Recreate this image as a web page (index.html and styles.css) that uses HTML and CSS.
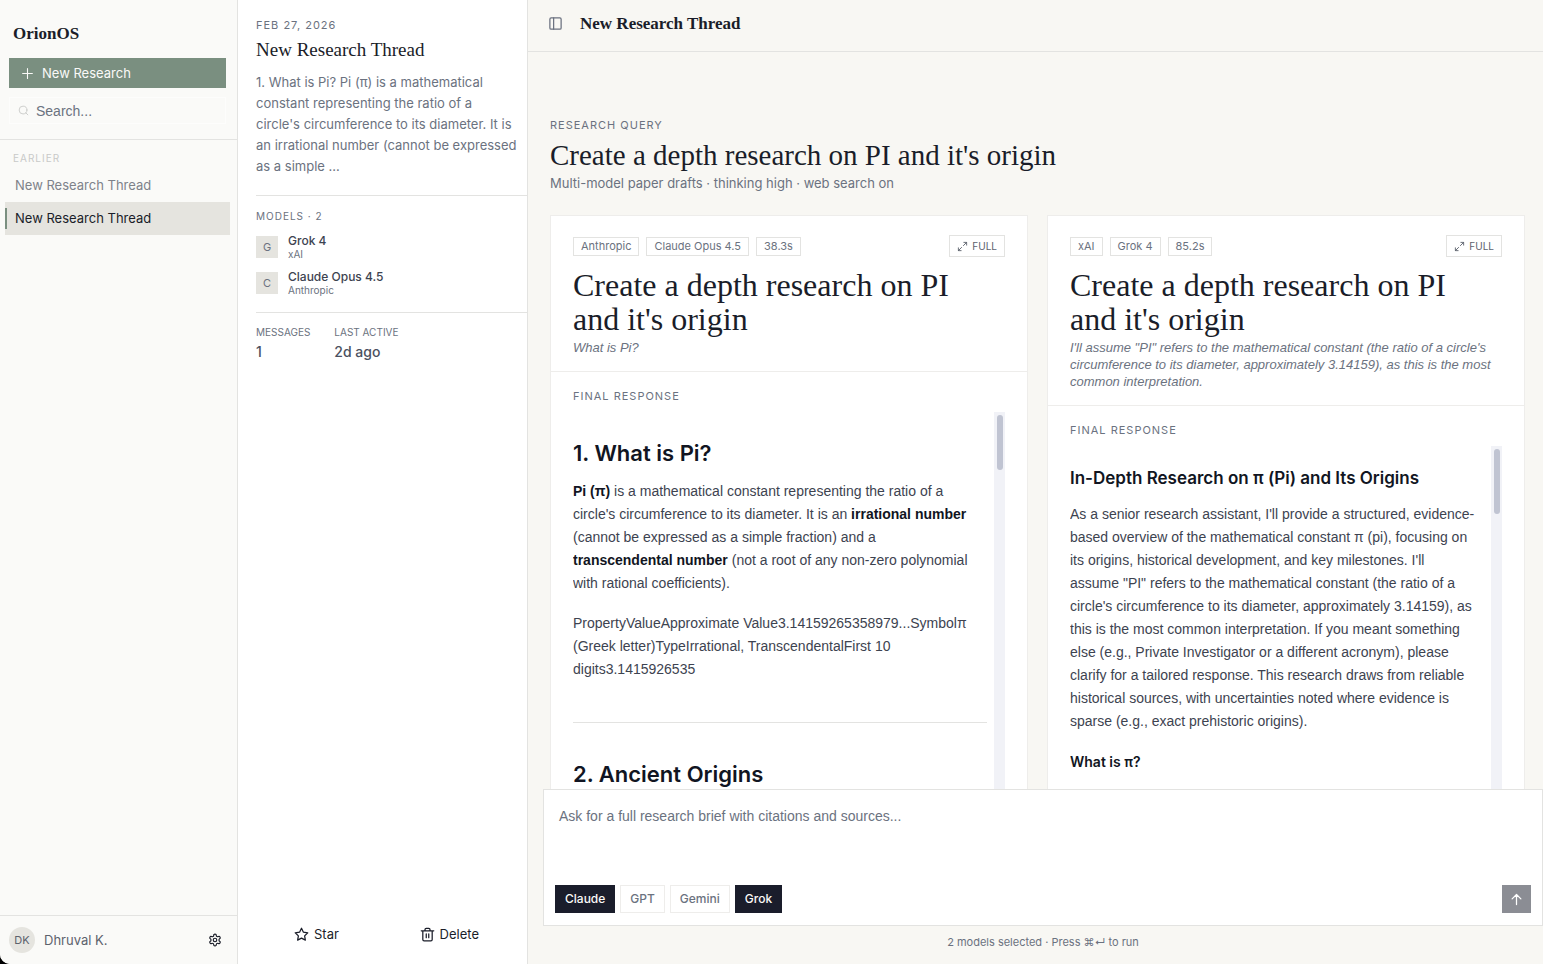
FILE: index.html
```html
<!DOCTYPE html>
<html lang="en">
<head>
    <meta charset="UTF-8">
    <meta name="viewport" content="width=device-width, initial-scale=1.0">
    <title>OrionOS</title>
    <link rel="stylesheet" href="styles.css">
</head>
<body>
    <div class="app">
        <aside class="sidebar">
            <div class="sidebar-top">
                <div class="brand">OrionOS</div>
                <button class="new-research">
                    <svg width="13" height="13" viewBox="0 0 24 24" class="icon"><path d="M3 12h18M12 3v18"/></svg>
                    New Research
                </button>
                <label class="search">
                    <svg width="11" height="11" viewBox="0 0 24 24" class="icon"><circle cx="11" cy="11" r="8.5"/><path d="m21.5 21.5-4.4-4.4"/></svg>
                    <input type="text" placeholder="Search..." aria-label="Search">
                </label>
            </div>
            <nav class="threads">
                <h2 class="threads-label">EARLIER</h2>
                <a href="#" class="thread">New Research Thread</a>
                <a href="#" class="thread active">New Research Thread</a>
            </nav>
            <div class="user">
                <span class="avatar">DK</span>
                <span class="user-name">Dhruval K.</span>
                <button class="icon-button" aria-label="Settings">
                    <svg width="14" height="14" viewBox="0 0 24 24" class="icon"><path d="M12.22 2h-.44a2 2 0 0 0-2 2v.18a2 2 0 0 1-1 1.73l-.43.25a2 2 0 0 1-2 0l-.15-.08a2 2 0 0 0-2.73.73l-.22.38a2 2 0 0 0 .73 2.73l.15.1a2 2 0 0 1 1 1.72v.51a2 2 0 0 1-1 1.74l-.15.09a2 2 0 0 0-.73 2.73l.22.38a2 2 0 0 0 2.73.73l.15-.08a2 2 0 0 1 2 0l.43.25a2 2 0 0 1 1 1.73V20a2 2 0 0 0 2 2h.44a2 2 0 0 0 2-2v-.18a2 2 0 0 1 1-1.73l.43-.25a2 2 0 0 1 2 0l.15.08a2 2 0 0 0 2.73-.73l.22-.39a2 2 0 0 0-.73-2.73l-.15-.08a2 2 0 0 1-1-1.74v-.5a2 2 0 0 1 1-1.74l.15-.09a2 2 0 0 0 .73-2.73l-.22-.38a2 2 0 0 0-2.73-.73l-.15.08a2 2 0 0 1-2 0l-.43-.25a2 2 0 0 1-1-1.73V4a2 2 0 0 0-2-2z"/><circle cx="12" cy="12" r="3"/></svg>
                </button>
            </div>
        </aside>

        <section class="details">
            <div class="summary">
                <div class="date">FEB 27, 2026</div>
                <h2 class="summary-title">New Research Thread</h2>
                <p class="summary-text">1. What is Pi? Pi (π) is a mathematical constant representing the ratio of a circle's circumference to its diameter. It is an irrational number (cannot be expressed as a simple ...</p>
            </div>
            <div class="models">
                <h3 class="models-label">MODELS · 2</h3>
                <div class="model">
                    <span class="model-badge">G</span>
                    <div>
                        <div class="model-name">Grok 4</div>
                        <div class="model-vendor">xAI</div>
                    </div>
                </div>
                <div class="model">
                    <span class="model-badge">C</span>
                    <div>
                        <div class="model-name">Claude Opus 4.5</div>
                        <div class="model-vendor">Anthropic</div>
                    </div>
                </div>
            </div>
            <div class="stats">
                <div>
                    <div class="stat-label">MESSAGES</div>
                    <div class="stat-value">1</div>
                </div>
                <div>
                    <div class="stat-label">LAST ACTIVE</div>
                    <div class="stat-value">2d ago</div>
                </div>
            </div>
            <div class="actions">
                <button class="action">
                    <svg width="15" height="15" viewBox="0 0 24 24" class="icon"><path d="M12 2l3.09 6.26L22 9.27l-5 4.87 1.18 6.88L12 17.77l-6.18 3.25L7 14.14 2 9.27l6.91-1.01z"/></svg>
                    Star
                </button>
                <button class="action">
                    <svg width="15" height="15" viewBox="0 0 24 24" class="icon"><path d="M2 6h20M19.500 6v14a2 2 0 0 1-2 2h-11a2 2 0 0 1-2-2V6M8 6V4a2 2 0 0 1 2-2h4a2 2 0 0 1 2 2v2M10 11v6M14 11v6"/></svg>
                    Delete
                </button>
            </div>
        </section>

        <main class="main">
            <header class="topbar">
                <button class="icon-button toggle" aria-label="Toggle sidebar">
                    <svg width="15" height="15" viewBox="0 0 24 24" class="icon"><rect x="3" y="3" width="18" height="18" rx="2"/><path d="M9 3v18"/></svg>
                </button>
                <h1 class="topbar-title">New Research Thread</h1>
            </header>

            <div class="content">
                <div class="label">RESEARCH QUERY</div>
                <h2 class="query-title">Create a depth research on PI and it's origin</h2>
                <p class="query-meta">Multi-model paper drafts · thinking high · web search on</p>

                <div class="papers">
                    <article class="paper">
                        <div class="paper-head">
                            <div class="chips">
                                <span class="chip">Anthropic</span>
                                <span class="chip">Claude Opus 4.5</span>
                                <span class="chip">38.3s</span>
                                <button class="full">
                                    <svg width="11" height="11" viewBox="0 0 24 24" class="icon"><path d="M15 3h6v6M21 3l-7 7M3 21l7-7M9 21H3v-6"/></svg>
                                    FULL
                                </button>
                            </div>
                            <h3 class="paper-title">Create a depth research on PI <br>and it's origin</h3>
                            <p class="paper-sub">What is Pi?</p>
                        </div>
                        <div class="paper-body">
                            <div class="label">FINAL RESPONSE</div>
                            <div class="response">
                                <div class="prose">
                                    <h2>1. What is Pi?</h2>
                                    <p><strong>Pi (π)</strong> is a mathematical constant representing the ratio of a circle's circumference to its diameter. It is an <strong>irrational number</strong> (cannot be expressed as a simple fraction) and a <br><strong>transcendental number</strong> (not a root of any non-zero polynomial with rational coefficients).</p>
                                    <p>PropertyValueApproximate Value3.14159265358979...Symbolπ (Greek letter)TypeIrrational, TranscendentalFirst 10 <br>digits3.1415926535</p>
                                    <hr>
                                    <h2>2. Ancient Origins</h2>
                                </div>
                                <div class="track"><div class="thumb"></div></div>
                            </div>
                        </div>
                    </article>

                    <article class="paper">
                        <div class="paper-head">
                            <div class="chips">
                                <span class="chip">xAI</span>
                                <span class="chip">Grok 4</span>
                                <span class="chip">85.2s</span>
                                <button class="full">
                                    <svg width="11" height="11" viewBox="0 0 24 24" class="icon"><path d="M15 3h6v6M21 3l-7 7M3 21l7-7M9 21H3v-6"/></svg>
                                    FULL
                                </button>
                            </div>
                            <h3 class="paper-title">Create a depth research on PI <br>and it's origin</h3>
                            <p class="paper-sub">I'll assume "PI" refers to the mathematical constant (the ratio of a circle's circumference to its diameter, approximately 3.14159), as this is the most common interpretation.</p>
                        </div>
                        <div class="paper-body">
                            <div class="label">FINAL RESPONSE</div>
                            <div class="response">
                                <div class="prose">
                                    <h3>In-Depth Research on π (Pi) and Its Origins</h3>
                                    <p>As a senior research assistant, I'll provide a structured, evidence-based overview of the mathematical constant π (pi), focusing on its origins, historical development, and key milestones. I'll <br>assume "PI" refers to the mathematical constant (the ratio of a circle's circumference to its diameter, approximately 3.14159), as this is the most common interpretation. If you meant something else (e.g., Private Investigator or a different acronym), please <br>clarify for a tailored response. This research draws from reliable historical sources, with uncertainties noted where evidence is <br>sparse (e.g., exact prehistoric origins).</p>
                                    <h4>What is π?</h4>
                                </div>
                                <div class="track"><div class="thumb tall"></div></div>
                            </div>
                        </div>
                    </article>
                </div>
            </div>

            <form class="composer">
                <textarea class="prompt" aria-label="Research prompt" placeholder="Ask for a full research brief with citations and sources..."></textarea>
                <div class="composer-row">
                    <button type="button" class="pick on">Claude</button>
                    <button type="button" class="pick">GPT</button>
                    <button type="button" class="pick">Gemini</button>
                    <button type="button" class="pick on">Grok</button>
                    <button type="button" class="send" aria-label="Run">
                        <svg width="15" height="15" viewBox="0 0 24 24" class="icon"><path d="m5 11 7-7 7 7M12 20V4"/></svg>
                    </button>
                </div>
            </form>
            <p class="hint">2 models selected · Press ⌘↵ to run</p>
        </main>
    </div>
</body>
</html>
```
FILE: styles.css
```css
* {
    box-sizing: border-box;
}
body {
    margin: 0;
    background-color: #000;
    font-family: Inter, "Liberation Sans", sans-serif;
    font-size: 13px;
    color: #1a1d29;
}
h1, h2, h3, h4, p {
    margin: 0;
    font-weight: 400;
}
button {
    font: inherit;
    color: inherit;
    background: none;
    border: none;
    padding: 0;
    cursor: pointer;
}
a {
    color: inherit;
    text-decoration: none;
}
.icon {
    fill: none;
    stroke: currentColor;
    stroke-width: 2;
    stroke-linecap: round;
    stroke-linejoin: round;
    flex-shrink: 0;
}
.app {
    display: flex;
    height: 100vh;
    border-bottom-left-radius: 10px;
    overflow: hidden;
    background-color: #f8f7f3;
}

/* sidebar */
.sidebar {
    display: flex;
    flex-direction: column;
    width: 238px;
    flex-shrink: 0;
    background-color: #fafaf8;
    border-right: 1px solid #e3e3e1;
}
.sidebar-top {
    padding: 23px 11px 15px 9px;
    border-bottom: 1px solid #e3e3e1;
}
.brand {
    padding-left: 4px;
    margin-bottom: 13px;
    font-family: "Liberation Serif", serif;
    font-size: 17px;
    font-weight: 700;
    line-height: 22px;
}
.new-research {
    display: flex;
    align-items: center;
    gap: 8px;
    width: 100%;
    height: 30px;
    padding-left: 12px;
    background-color: #7a8f80;
    color: #fafaf8;
}
.search {
    display: flex;
    align-items: center;
    gap: 7px;
    height: 27px;
    margin-top: 9px;
    padding-left: 8px;
    border: 1px solid #fdfdfc;
    color: #c9cac8;
}
.search input {
    width: 100%;
    padding: 0;
    border: none;
    background: none;
    font-family: "Liberation Sans", sans-serif;
    font-size: 14px;
}
.search input::placeholder {
    color: #6b7280;
}
.threads {
    flex: 1;
    padding: 11px 7px 0 5px;
}
.threads-label {
    padding-left: 8px;
    margin-bottom: 4px;
    font-size: 10px;
    line-height: 14px;
    letter-spacing: 1px;
    color: #c8c9c8;
}
.thread {
    display: flex;
    align-items: center;
    height: 33px;
    padding: 0 8px 2px;
    border-left: 2px solid transparent;
    color: #7e828a;
}
.thread.active {
    position: relative;
    background-color: #e5e4df;
    color: #1a1d29;
}
.thread.active::before {
    content: "";
    position: absolute;
    left: -2px;
    top: 6px;
    width: 2px;
    height: 21px;
    background-color: #7a8f80;
}
.user {
    display: flex;
    align-items: center;
    gap: 9px;
    height: 49px;
    padding: 0 15px 0 9px;
    border-top: 1px solid #e3e3e1;
    color: #5d626d;
}
.avatar {
    width: 26px;
    height: 26px;
    border-radius: 50%;
    background-color: #e5e4df;
    font-size: 11px;
    line-height: 26px;
    text-align: center;
}
.user-name {
    flex: 1;
}
.icon-button {
    display: flex;
    color: #1a1d29;
}

/* details */
.details {
    display: flex;
    flex-direction: column;
    width: 290px;
    flex-shrink: 0;
    padding-left: 18px;
    background-color: #fff;
    border-right: 1px solid #e3e3e1;
    color: #6b7280;
}
.summary {
    padding: 18px 10px 18px 0;
    border-bottom: 1px solid #e3e3e1;
}
.date {
    font-size: 11px;
    line-height: 14px;
    letter-spacing: 1px;
}
.summary-title {
    margin: 6px 0 10px;
    font-family: "Liberation Serif", serif;
    font-size: 19px;
    line-height: 24px;
    color: #1a1d29;
}
.summary-text {
    line-height: 21px;
}
.models {
    padding: 13px 0 16px;
    border-bottom: 1px solid #e3e3e1;
}
.models-label {
    margin-bottom: 10px;
    font-size: 10px;
    line-height: 14px;
    letter-spacing: 1px;
}
.model {
    display: flex;
    align-items: center;
    gap: 10px;
}
.model + .model {
    margin-top: 9px;
}
.model-badge {
    width: 22px;
    height: 22px;
    background-color: #e5e4df;
    font-size: 11px;
    line-height: 22px;
    text-align: center;
}
.model-name {
    font-size: 12px;
    font-weight: 500;
    line-height: 15px;
    color: #3d4350;
}
.model-vendor {
    font-size: 10px;
    line-height: 12px;
}
.stats {
    display: flex;
    gap: 24px;
    padding-top: 12px;
}
.stat-label {
    font-size: 10px;
    line-height: 14px;
}
.stat-value {
    font-size: 14px;
    font-weight: 500;
    line-height: 26px;
    color: #4b5160;
}
.actions {
    display: flex;
    justify-content: space-between;
    margin-top: auto;
    padding: 0 48px 16px 38px;
    color: #1a1d29;
}
.action {
    display: flex;
    align-items: center;
    gap: 5px;
    height: 28px;
}

/* main */
.main {
    display: flex;
    flex-direction: column;
    flex: 1;
    min-width: 0;
}
.topbar {
    display: flex;
    align-items: center;
    gap: 17px;
    height: 52px;
    flex-shrink: 0;
    padding: 0 20px 4px;
    border-bottom: 1px solid #e3e3e1;
}
.toggle {
    color: #6b7280;
}
.topbar-title {
    font-family: "Liberation Serif", serif;
    font-size: 17px;
    font-weight: 700;
    line-height: 22px;
}
.content {
    flex: 1;
    min-height: 0;
    overflow: hidden;
    padding: 66px 18px 0 22px;
}
.label {
    font-size: 11px;
    line-height: 14px;
    letter-spacing: 1px;
    color: #6b7280;
}
.query-title {
    margin-top: 5px;
    font-family: "Liberation Serif", serif;
    font-size: 29px;
    line-height: 36px;
}
.query-meta {
    line-height: 20px;
    color: #6b7280;
}
.papers {
    display: grid;
    grid-template-columns: 1fr 1fr;
    gap: 19px;
    margin-top: 22px;
}
.paper {
    border: 1px solid #eeedeb;
    background-color: #fff;
}
.paper-head {
    padding: 19px 22px 15px;
    border-bottom: 1px solid #eeedeb;
}
.chips {
    display: flex;
    align-items: center;
    gap: 7px;
}
.chip {
    padding: 0 7px;
    border: 1px solid #e3e3e1;
    font-size: 11px;
    line-height: 17px;
    color: #6b7280;
}
.full {
    display: flex;
    align-items: center;
    gap: 4px;
    height: 22px;
    margin-left: auto;
    padding: 0 7px;
    border: 1px solid #e3e3e1;
    font-size: 10px;
    color: #5d626d;
}
.paper-title {
    margin-top: 11px;
    font-family: "Liberation Serif", serif;
    font-size: 32px;
    line-height: 34px;
}
.paper-sub {
    margin-top: 3px;
    font-family: "Liberation Sans", sans-serif;
    font-style: italic;
    line-height: 17px;
    color: #6b7280;
}
.paper-body {
    padding: 17px 22px 0;
}
.response {
    display: flex;
    height: 540px;
    margin-top: 9px;
    overflow: hidden;
}
.prose {
    flex: 1;
    padding-right: 7px;
    line-height: 23px;
    font-size: 14px;
    color: #3d4350;
}
.prose h2, .prose h3, .prose h4, .prose strong {
    font-weight: 600;
    color: #111522;
}
.prose h2 {
    padding-top: 25px;
    margin-bottom: 11px;
    font-size: 22px;
    line-height: 32px;
}
.prose h3 {
    padding-top: 18px;
    margin-bottom: 11px;
    font-size: 17px;
    line-height: 28px;
}
.prose h4 {
    font-size: 14px;
}
.prose p {
    margin-bottom: 17px;
    font-family: "Liberation Sans", sans-serif;
}
.prose hr {
    margin: 41px 0 10px;
    border: none;
    border-top: 1px solid #e3e3e1;
}
.track {
    width: 11px;
    padding: 3px 2px 0 3px;
    background-color: #f1f2f7;
}
.thumb {
    height: 55px;
    border-radius: 3px;
    background-color: #c0c4d2;
}
.thumb.tall {
    height: 65px;
}

/* composer */
.composer {
    margin-left: 15px;
    padding: 15px 11px 12px;
    background-color: #fff;
    border: 1px solid #e3e3e1;
}
.prompt {
    display: block;
    width: 100%;
    height: 80px;
    padding: 0 4px;
    border: none;
    outline: none;
    resize: none;
    font-family: "Liberation Sans", sans-serif;
    font-size: 14px;
    line-height: 22px;
}
.prompt::placeholder {
    color: #6b7280;
}
.composer-row {
    display: flex;
    gap: 5px;
}
.pick {
    height: 28px;
    padding: 0 9px 1px;
    border: 1px solid #eeedeb;
    font-size: 12px;
    font-weight: 500;
    color: #6b7280;
}
.pick.on {
    border-color: #1a1d2b;
    background-color: #1a1d2b;
    color: #fafaf8;
}
.send {
    display: flex;
    align-items: center;
    justify-content: center;
    width: 29px;
    height: 28px;
    margin-left: auto;
    background-color: #8b8d94;
    color: #fff;
}
.hint {
    padding: 9px 0 14px 15px;
    font-size: 11px;
    line-height: 15px;
    text-align: center;
    color: #6b7280;
}
```
